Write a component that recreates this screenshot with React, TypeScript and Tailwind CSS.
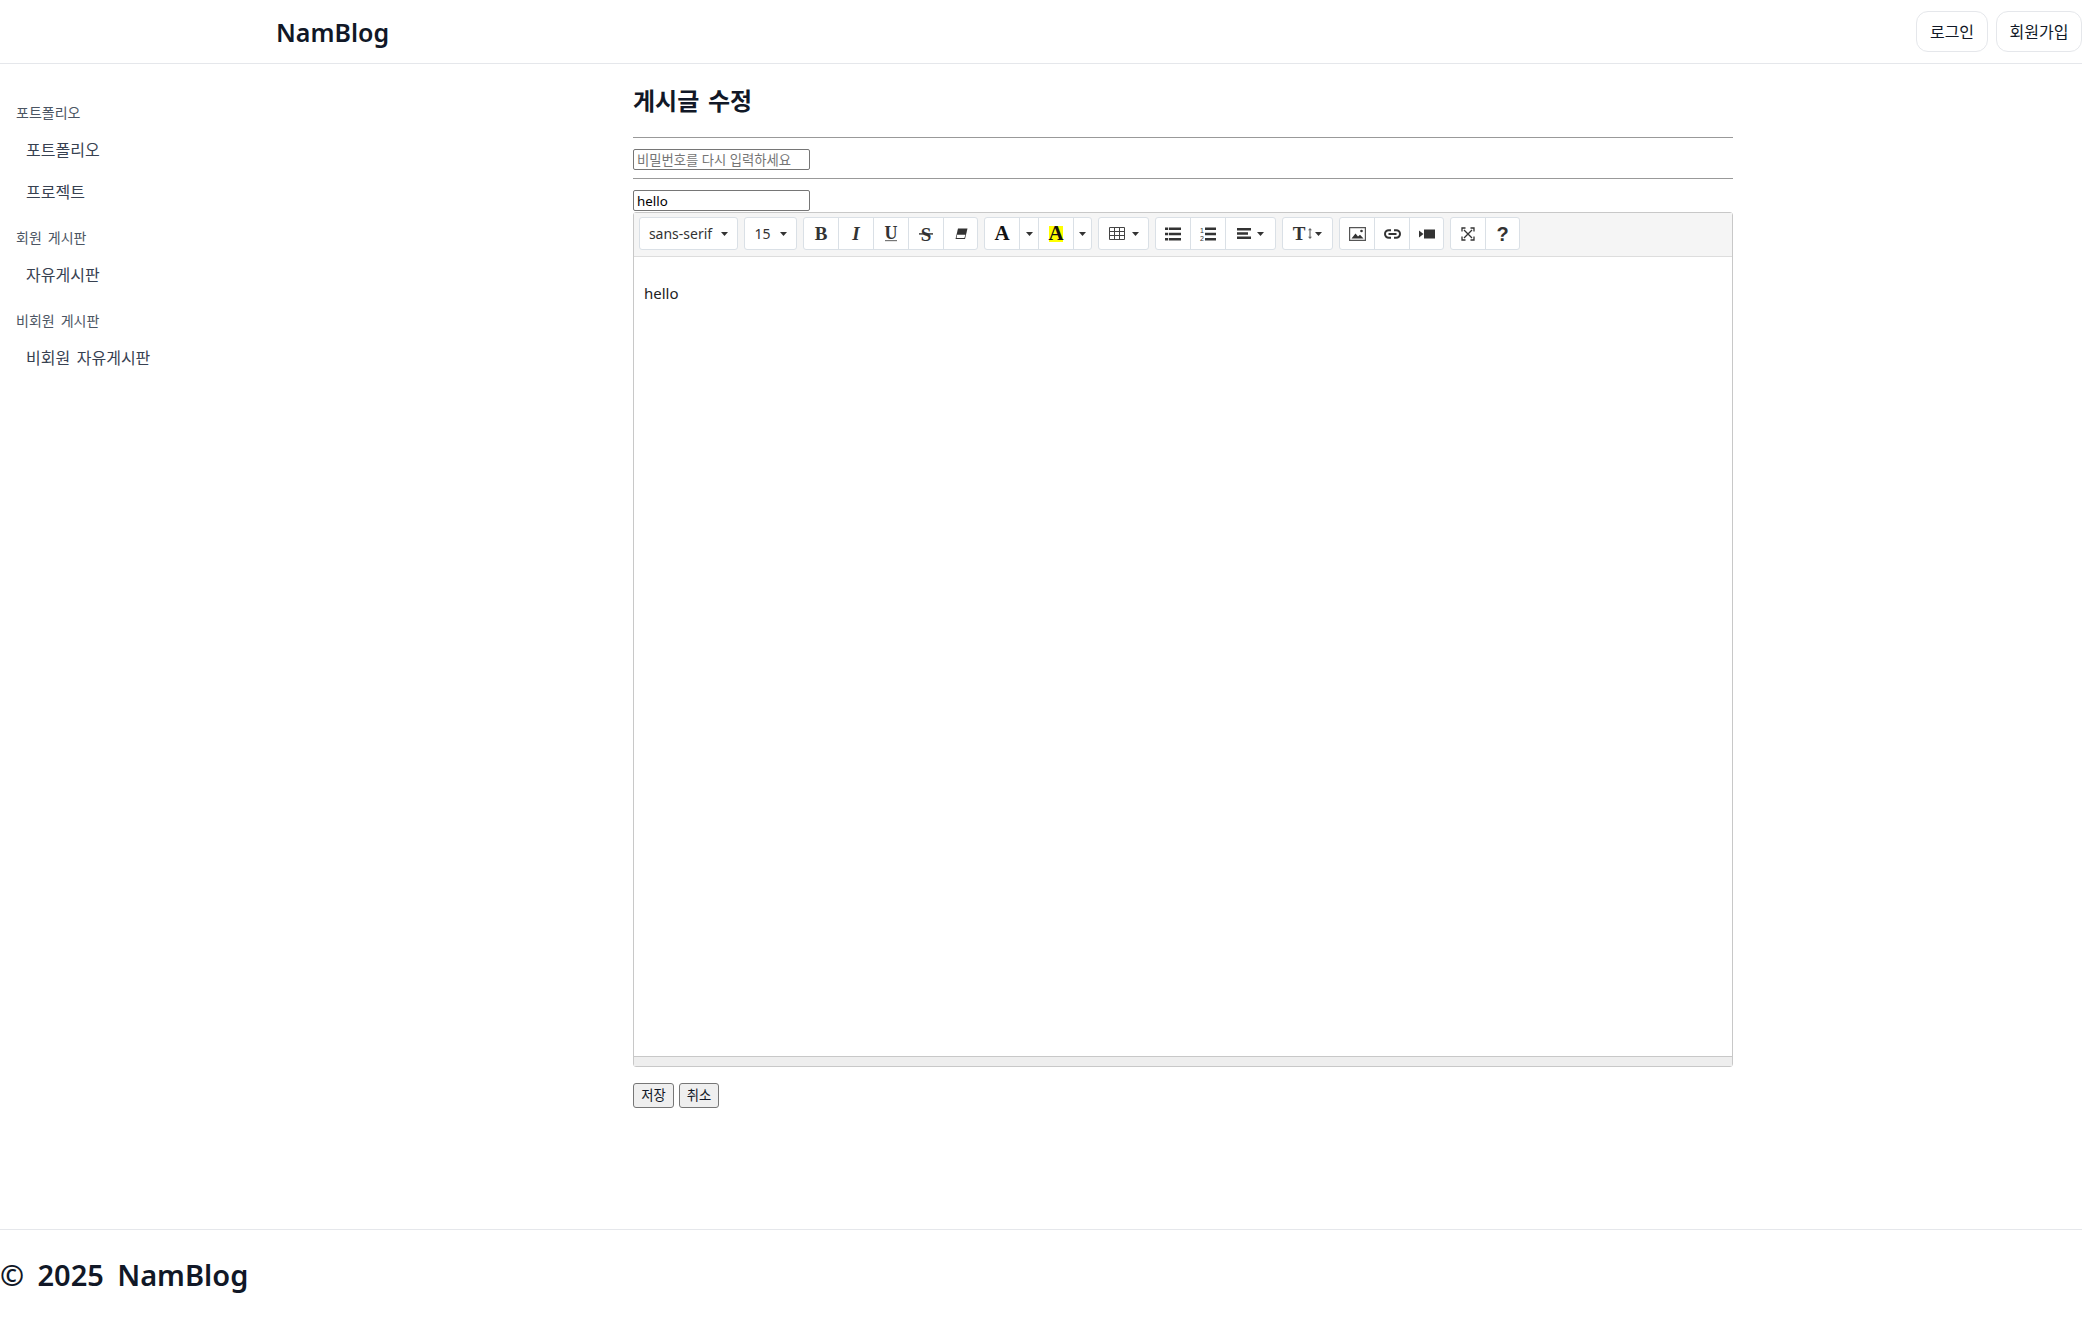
const sans = 'font-["Noto_Sans","Noto_Sans_CJK_KR",sans-serif]';

function Caret() {
  return (
    <svg width="7" height="4" viewBox="0 0 7 4" className="shrink-0">
      <path d="M0 0h7L3.5 4z" fill="#333" />
    </svg>
  );
}

function Ico({ children }: { children: React.ReactNode }) {
  return (
    <svg width="18" height="18" viewBox="0 0 18 18" fill="#333" className="overflow-visible">
      {children}
    </svg>
  );
}

function SerifA({ bg }: { bg?: string }) {
  return (
    <span
      className={`flex h-[16px] w-[14px] items-center justify-center font-["Liberation_Serif",serif] text-[21px] leading-none font-bold text-[#111] ${bg ?? ''}`}
    >
      A
    </span>
  );
}

function Btn({ w, last, children }: { w: string; last?: boolean; children: React.ReactNode }) {
  return (
    <div className={`flex h-full items-center justify-center gap-[6px] ${w} ${last ? '' : 'border-r border-[#dae0e6]'}`}>
      {children}
    </div>
  );
}

function Group({ children }: { children: React.ReactNode }) {
  return (
    <div className="flex h-[33px] items-center rounded-[3px] border border-[#dae0e6] bg-white">{children}</div>
  );
}

function Toolbar() {
  return (
    <div className="flex h-[44px] items-center gap-[6px] border-b border-[#ddd] bg-[#f5f5f5] pb-[2px] pl-[5px]">
      <Group>
        <div className={`flex h-full w-[97px] items-center justify-center gap-[9px] text-[14px] text-[#333] ${sans}`}>
          sans-serif <Caret />
        </div>
      </Group>
      <Group>
        <div className={`flex h-full w-[51px] items-center justify-center gap-[9px] text-[14px] text-[#333] ${sans}`}>
          15 <Caret />
        </div>
      </Group>
      <Group>
        <Btn w="w-[35px]">
          <span className='font-["Liberation_Serif",serif] text-[19px] leading-none font-bold text-[#333]'>B</span>
        </Btn>
        <Btn w="w-[35px]">
          <span className='font-["Liberation_Serif",serif] text-[19px] leading-none font-bold italic text-[#333]'>I</span>
        </Btn>
        <Btn w="w-[35px]">
          <Ico>
            <text x="9" y="13.5" textAnchor="middle" fontFamily="Liberation Serif" fontWeight="bold" fontSize="18">U</text>
            <rect x="3" y="15" width="12" height="1.2" fill="#777" />
          </Ico>
        </Btn>
        <Btn w="w-[35px]">
          <Ico>
            <text x="9" y="15.5" textAnchor="middle" fontFamily="Liberation Serif" fontWeight="bold" fontSize="19">S</text>
            <rect x="2" y="8.2" width="14" height="1.4" />
          </Ico>
        </Btn>
        <Btn w="w-[33px]" last>
          <Ico>
            <path d="M6 3.5h9.5L13 14H3.5z" fill="#333" />
            <path d="M5 9.8h8.4L12.4 13H4.6z" fill="#fff" />
          </Ico>
        </Btn>
      </Group>
      <Group>
        <Btn w="w-[35px]">
          <SerifA />
        </Btn>
        <Btn w="w-[19px]">
          <Caret />
        </Btn>
        <Btn w="w-[35px]">
          <SerifA bg="bg-[#ffff00]" />
        </Btn>
        <Btn w="w-[17px]" last>
          <Caret />
        </Btn>
      </Group>
      <Group>
        <div className="flex h-full w-[49px] items-center justify-center gap-[7px]">
          <svg width="16" height="13" viewBox="0 0 16 13" fill="none" stroke="#444" strokeWidth="1">
            <path d="M.5.5h15v12H.5zM.5 4.5h15M.5 8.5h15M5.5.5v12M10.5.5v12" />
          </svg>
          <Caret />
        </div>
      </Group>
      <Group>
        <Btn w="w-[35px]">
          <Ico>
            <path d="M1 2.5h3.2v2.5H1zM1 7.75h3.2v2.5H1zM1 13h3.2v2.5H1zM5 2.5h12V5H5zM5 7.75h12v2.5H5zM5 13h12v2.5H5z" />
          </Ico>
        </Btn>
        <Btn w="w-[35px]">
          <Ico>
            <path d="M6 2.5h11V5H6zM6 7.75h11v2.5H6zM6 13h11v2.5H6z" />
            <text x="3" y="7.5" fontSize="7" textAnchor="middle" fontFamily="Liberation Sans">1</text>
            <text x="3" y="15.5" fontSize="7" textAnchor="middle" fontFamily="Liberation Sans">2</text>
          </Ico>
        </Btn>
        <Btn w="w-[49px]" last>
          <svg width="14" height="11" viewBox="0 0 14 11" fill="#333">
            <path d="M0 0h14v2.4H0zM0 4.3h11v2.4H0zM0 8.6h14V11H0z" />
          </svg>
          <Caret />
        </Btn>
      </Group>
      <Group>
        <div className="flex h-full w-[49px] items-center justify-center gap-[3px]">
          <span className='font-["Liberation_Serif",serif] text-[19px] leading-none font-bold text-[#333]'>T</span>
          <svg width="4" height="13" viewBox="0 0 5 14" fill="#666">
            <path d="M2.5 0L5 3H3.2v8H5l-2.5 3L0 11h1.8V3H0z" />
          </svg>
          <Caret />
        </div>
      </Group>
      <Group>
        <Btn w="w-[35px]">
          <svg width="17" height="14" viewBox="0 0 17 14">
            <path d="M.6.6h15.8v12.8H.6z" fill="none" stroke="#555" strokeWidth="1.2" />
            <path d="M2.5 11.5l4-5 2.5 3 2-1.8 3.5 3.8z" fill="#333" />
            <circle cx="12.5" cy="4" r="1.3" fill="#333" />
          </svg>
        </Btn>
        <Btn w="w-[35px]">
          <svg width="17" height="10" viewBox="0 0 17 10" fill="none" stroke="#333" strokeWidth="2">
            <path d="M7 1.2H4.8a3.8 3.8 0 0 0 0 7.6H7M10 1.2h2.2a3.8 3.8 0 0 1 0 7.6H10M4.5 5h8" />
          </svg>
        </Btn>
        <Btn w="w-[33px]" last>
          <svg width="16" height="10" viewBox="0 0 16 10" fill="#333">
            <path d="M0 1.5L4.5 5 0 8.5z" />
            <rect x="5" y="0.5" width="11" height="9" />
          </svg>
        </Btn>
      </Group>
      <Group>
        <Btn w="w-[35px]">
          <svg width="14" height="14" viewBox="0 0 14 14" fill="none" stroke="#333" strokeWidth="1.3">
            <path d="M3 3l8 8M11 3l-8 8" />
            <path d="M1 4.5V1h3.5M9.5 1H13v3.5M13 9.5V13H9.5M4.5 13H1V9.5" />
          </svg>
        </Btn>
        <Btn w="w-[33px]" last>
          <span className='font-["Liberation_Sans",sans-serif] text-[20px] leading-none font-bold text-[#333]'>?</span>
        </Btn>
      </Group>
    </div>
  );
}

function NavGroup({ title, items }: { title: string; items: string[] }) {
  return (
    <div className="mb-[10px]">
      <p className="mb-[3px] flex h-[28px] items-center px-4 text-[14px] text-[#4b5563]">{title}</p>
      {items.map((item) => (
        <a key={item} className="flex h-[42px] items-center px-[26px] text-[16px] text-[#374151]">
          {item}
        </a>
      ))}
    </div>
  );
}

export default function App() {
  return (
    <div className={`flex min-h-[1319px] flex-col bg-white text-[#111827] [word-spacing:0.15em] ${sans}`}>
      <header className="flex h-[64px] items-center justify-between border-b border-[#e5e7eb] pl-[276px]">
        <span className="pt-[2px] text-[25px] font-semibold">NamBlog</span>
        <div className="flex gap-2">
          <button className="h-[41px] w-[72px] rounded-xl border border-[#e5e7eb] text-[16px]">로그인</button>
          <button className="h-[41px] w-[86px] rounded-xl border border-[#e5e7eb] text-[16px]">회원가입</button>
        </div>
      </header>

      <div className="flex h-[1166px] border-b border-[#e5e7eb]">
        <aside className="w-[633px] shrink-0 pt-[34px]">
          <NavGroup title="포트폴리오" items={['포트폴리오', '프로젝트']} />
          <NavGroup title="회원 게시판" items={['자유게시판']} />
          <NavGroup title="비회원 게시판" items={['비회원 자유게시판']} />
        </aside>

        <main className="w-[1100px]">
          <h1 className="mt-[19px] h-[36px] text-[24px] leading-[36px] font-semibold">게시글 수정</h1>
          <hr className="mt-[18px] border-t border-[#999]" />
          <input
            placeholder="비밀번호를 다시 입력하세요"
            className="mt-[11px] block h-[21px] w-[177px] rounded-[2px] border border-[#767676] px-[3px] text-[13.33px] placeholder:text-[#757575]"
          />
          <hr className="mt-[8px] border-t border-[#999]" />
          <input
            defaultValue="hello"
            className="mt-[11px] block h-[21px] w-[177px] rounded-[2px] border border-[#767676] px-[3px] text-[13.33px] text-black"
          />
          <div className="mt-px rounded-[3px] border border-[#c8c8c8]">
            <Toolbar />
            <div className="h-[799px] px-[10px] pt-[24px] text-[15px] leading-[24px] text-[#222]">hello</div>
            <div className="h-[10px] border-t border-[#c8c8c8] bg-[#eee]" />
          </div>
          <div className="mt-[16px] flex gap-[5px]">
            <button className="h-[25px] w-[41px] rounded-[3px] border border-[#767676] bg-[#efefef] text-[13.33px]">저장</button>
            <button className="h-[25px] w-[40px] rounded-[3px] border border-[#767676] bg-[#efefef] text-[13.33px]">취소</button>
          </div>
        </main>
      </div>

      <footer className="flex h-[88px] items-center pt-[2px] text-[29px] font-semibold [word-spacing:0.2em]">© 2025 NamBlog</footer>
    </div>
  );
}
